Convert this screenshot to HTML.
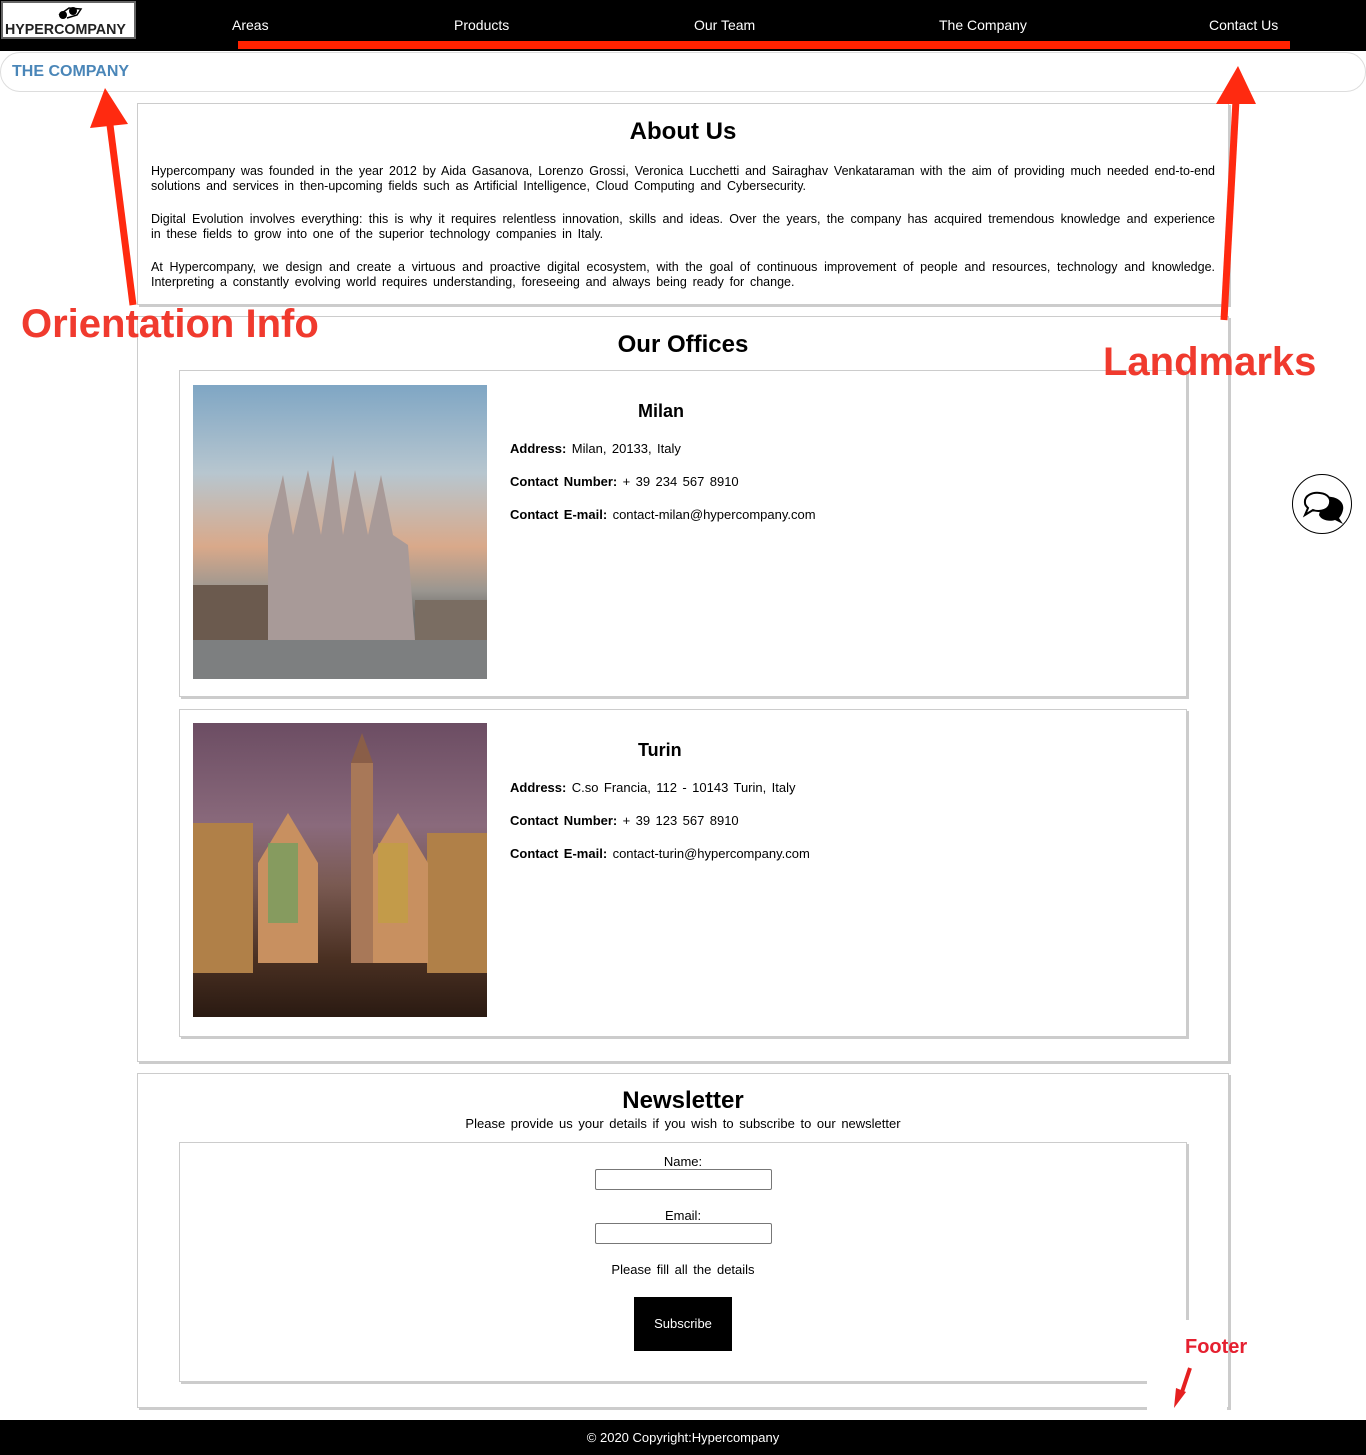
<!DOCTYPE html>
<html><head><meta charset="utf-8"><style>
*{margin:0;padding:0;box-sizing:border-box}
body{width:1366px;height:1455px;position:relative;background:#fff;font-family:"Liberation Sans",sans-serif;color:#000;overflow:hidden}
.a{position:absolute}
.nav{left:0;top:0;width:1366px;height:51px;background:#000}
.nav span{position:absolute;top:17px;color:#fff;font-size:14px}
.box{position:absolute;border:1px solid #ccc;box-shadow:2px 2px 0 #ccc;background:#fff}
p.j{font-size:12.5px;line-height:15px;text-align:justify;position:absolute;left:151px;width:1064px;word-spacing:2.3px}
.info{position:absolute;left:510px;font-size:13px;word-spacing:1.8px}
.info b{font-weight:bold}
h2{position:absolute;font-size:24px;font-weight:bold;text-align:center}
.lbl{color:#f03a2e;font-weight:bold;position:absolute}
</style></head><body>
<div class="a nav">
 <div class="a" style="left:1px;top:1px;width:135px;height:38px;background:#fff;border:2px solid #666">
  <svg class="a" style="left:52px;top:2px" width="30" height="16"><circle cx="8" cy="10" r="4"/><circle cx="18" cy="6" r="4"/><path d="M4 10 L14 3 L26 4 L22 10 L12 13" fill="none" stroke="#000" stroke-width="1.5"/></svg>
  <div class="a" style="left:2px;top:18px;font-size:15px;font-weight:bold;color:#222;transform:scaleX(0.95);transform-origin:left">HYPERCOMPANY</div>
 </div>
 <span style="left:232px">Areas</span><span style="left:454px">Products</span><span style="left:694px">Our Team</span><span style="left:939px">The Company</span><span style="left:1209px">Contact Us</span>
 <div class="a" style="left:238px;top:41px;width:1052px;height:8px;background:#ff2200"></div>
</div>
<div class="a" style="left:0;top:52px;width:1366px;height:40px;border:1px solid #ddd;border-radius:20px"></div>
<div class="a" style="left:12px;top:63px;font-size:16px;font-weight:bold;color:#4a86b8">THE COMPANY</div>

<div class="box" style="left:137px;top:103px;width:1092px;height:202px"></div>
<h2 style="left:137px;width:1092px;top:118px">About Us</h2>
<p class="j" style="top:164px">Hypercompany was founded in the year 2012 by Aida Gasanova, Lorenzo Grossi, Veronica Lucchetti and Sairaghav Venkataraman with the aim of providing much needed end-to-end solutions and services in then-upcoming fields such as Artificial Intelligence, Cloud Computing and Cybersecurity.</p>
<p class="j" style="top:212px">Digital Evolution involves everything: this is why it requires relentless innovation, skills and ideas. Over the years, the company has acquired tremendous knowledge and experience in these fields to grow into one of the superior technology companies in Italy.</p>
<p class="j" style="top:260px">At Hypercompany, we design and create a virtuous and proactive digital ecosystem, with the goal of continuous improvement of people and resources, technology and knowledge. Interpreting a constantly evolving world requires understanding, foreseeing and always being ready for change.</p>

<div class="box" style="left:137px;top:316px;width:1092px;height:746px"></div>
<h2 style="left:137px;width:1092px;top:331px">Our Offices</h2>
<div class="box" style="left:179px;top:370px;width:1008px;height:327px"></div>
<div class="a" style="left:193px;top:385px;width:294px;height:294px;background:linear-gradient(180deg,#7fa6c4 0%,#b7c6cf 30%,#d9a98a 55%,#9a9690 70%,#6f6e6c 78%,#8a8a88 100%)">
 <svg width="294" height="294"><path d="M75 255 L75 150 L90 90 L100 150 L115 85 L128 150 L140 70 L150 150 L162 85 L175 150 L188 90 L200 150 L215 160 L222 255Z" fill="#a89a98"/><rect x="0" y="200" width="75" height="55" fill="#6b5a4e"/><rect x="222" y="215" width="72" height="40" fill="#7a6d62"/><rect x="0" y="255" width="294" height="39" fill="#7d7f80"/></svg>
</div>
<div class="a" style="left:638px;top:401px;font-size:18px;font-weight:bold">Milan</div>
<div class="info" style="top:441px"><b>Address:</b> Milan, 20133, Italy</div>
<div class="info" style="top:474px"><b>Contact Number:</b> + 39 234 567 8910</div>
<div class="info" style="top:507px"><b>Contact E-mail:</b> contact-milan@hypercompany.com</div>

<div class="box" style="left:179px;top:709px;width:1008px;height:328px"></div>
<div class="a" style="left:193px;top:723px;width:294px;height:294px;background:linear-gradient(180deg,#6c4d63 0%,#8a6a7c 35%,#7a5a52 55%,#4a3022 80%,#2a1a12 100%)">
 <svg width="294" height="294"><rect x="0" y="100" width="60" height="150" fill="#b08048"/><rect x="234" y="110" width="60" height="140" fill="#b08048"/><path d="M65 240 L65 140 L95 90 L125 140 L125 240Z" fill="#c89060"/><path d="M175 240 L175 140 L205 90 L235 140 L235 240Z" fill="#c89060"/><rect x="158" y="40" width="22" height="200" fill="#a87858"/><path d="M158 40 L169 10 L180 40Z" fill="#8a5e48"/><rect x="75" y="120" width="30" height="80" fill="#6aa060" opacity=".7"/><rect x="185" y="120" width="30" height="80" fill="#c0a040" opacity=".7"/></svg>
</div>
<div class="a" style="left:638px;top:740px;font-size:18px;font-weight:bold">Turin</div>
<div class="info" style="top:780px"><b>Address:</b> C.so Francia, 112 - 10143 Turin, Italy</div>
<div class="info" style="top:813px"><b>Contact Number:</b> + 39 123 567 8910</div>
<div class="info" style="top:846px"><b>Contact E-mail:</b> contact-turin@hypercompany.com</div>

<div class="box" style="left:137px;top:1073px;width:1092px;height:335px"></div>
<h2 style="left:137px;width:1092px;top:1087px">Newsletter</h2>
<div class="a" style="left:137px;width:1092px;top:1116px;text-align:center;font-size:13px;word-spacing:2px">Please provide us your details if you wish to subscribe to our newsletter</div>
<div class="box" style="left:179px;top:1142px;width:1008px;height:240px"></div>
<div class="a" style="left:137px;width:1092px;top:1154px;text-align:center;font-size:13px">Name:</div>
<div class="a" style="left:595px;top:1169px;width:177px;height:21px;border:1px solid #777;border-radius:2px"></div>
<div class="a" style="left:137px;width:1092px;top:1208px;text-align:center;font-size:13px">Email:</div>
<div class="a" style="left:595px;top:1223px;width:177px;height:21px;border:1px solid #777;border-radius:2px"></div>
<div class="a" style="left:137px;width:1092px;top:1262px;text-align:center;font-size:13px;word-spacing:2px">Please fill all the details</div>
<div class="a" style="left:634px;top:1297px;width:98px;height:54px;background:#000;color:#fff;font-size:13px;text-align:center;line-height:54px">Subscribe</div>
<div class="a" style="left:1147px;top:1320px;width:80px;height:100px;background:#fff"></div>

<div class="a" style="left:0;top:1420px;width:1366px;height:35px;background:#000;color:#fff;font-size:13px;text-align:center;line-height:35px">© 2020 Copyright:Hypercompany</div>

<div class="a" style="left:1292px;top:474px;width:60px;height:60px;border:1.5px solid #000;border-radius:50%;background:#fff">
 <svg width="60" height="60"><path d="M30 22 C42 20 52 26 50 35 C49 40 46 43 46 43 L50 49 L42 45 C36 47 28 45 26 40Z" fill="#000"/><path d="M12 28 C11 20 20 17 27 18 C36 19 39 25 36 31 C33 36 25 37 20 35 L12 40 L15 33 C13 31 12 30 12 28Z" fill="#fff" stroke="#000" stroke-width="2"/></svg>
</div>

<svg class="a" style="left:0;top:0" width="1366" height="1455">
 <path d="M133 305 L110 125" stroke="#ff2a10" stroke-width="7"/><polygon points="90,128 128,124 105,88" fill="#ff2a10"/>
 <path d="M1224 320 L1236 100" stroke="#ff2a10" stroke-width="7"/><polygon points="1216,104 1256,104 1238,66" fill="#ff2a10"/>
 <path d="M1190 1368 L1182 1392" stroke="#e52020" stroke-width="4"/><polygon points="1176,1388 1186,1392 1174,1408" fill="#e52020"/>
</svg>
<div class="lbl" style="left:21px;top:302px;font-size:40px">Orientation Info</div>
<div class="lbl" style="left:1103px;top:340px;font-size:40px">Landmarks</div>
<div class="lbl" style="left:1185px;top:1336px;font-size:20px;color:#e52030">Footer</div>
</body></html>
